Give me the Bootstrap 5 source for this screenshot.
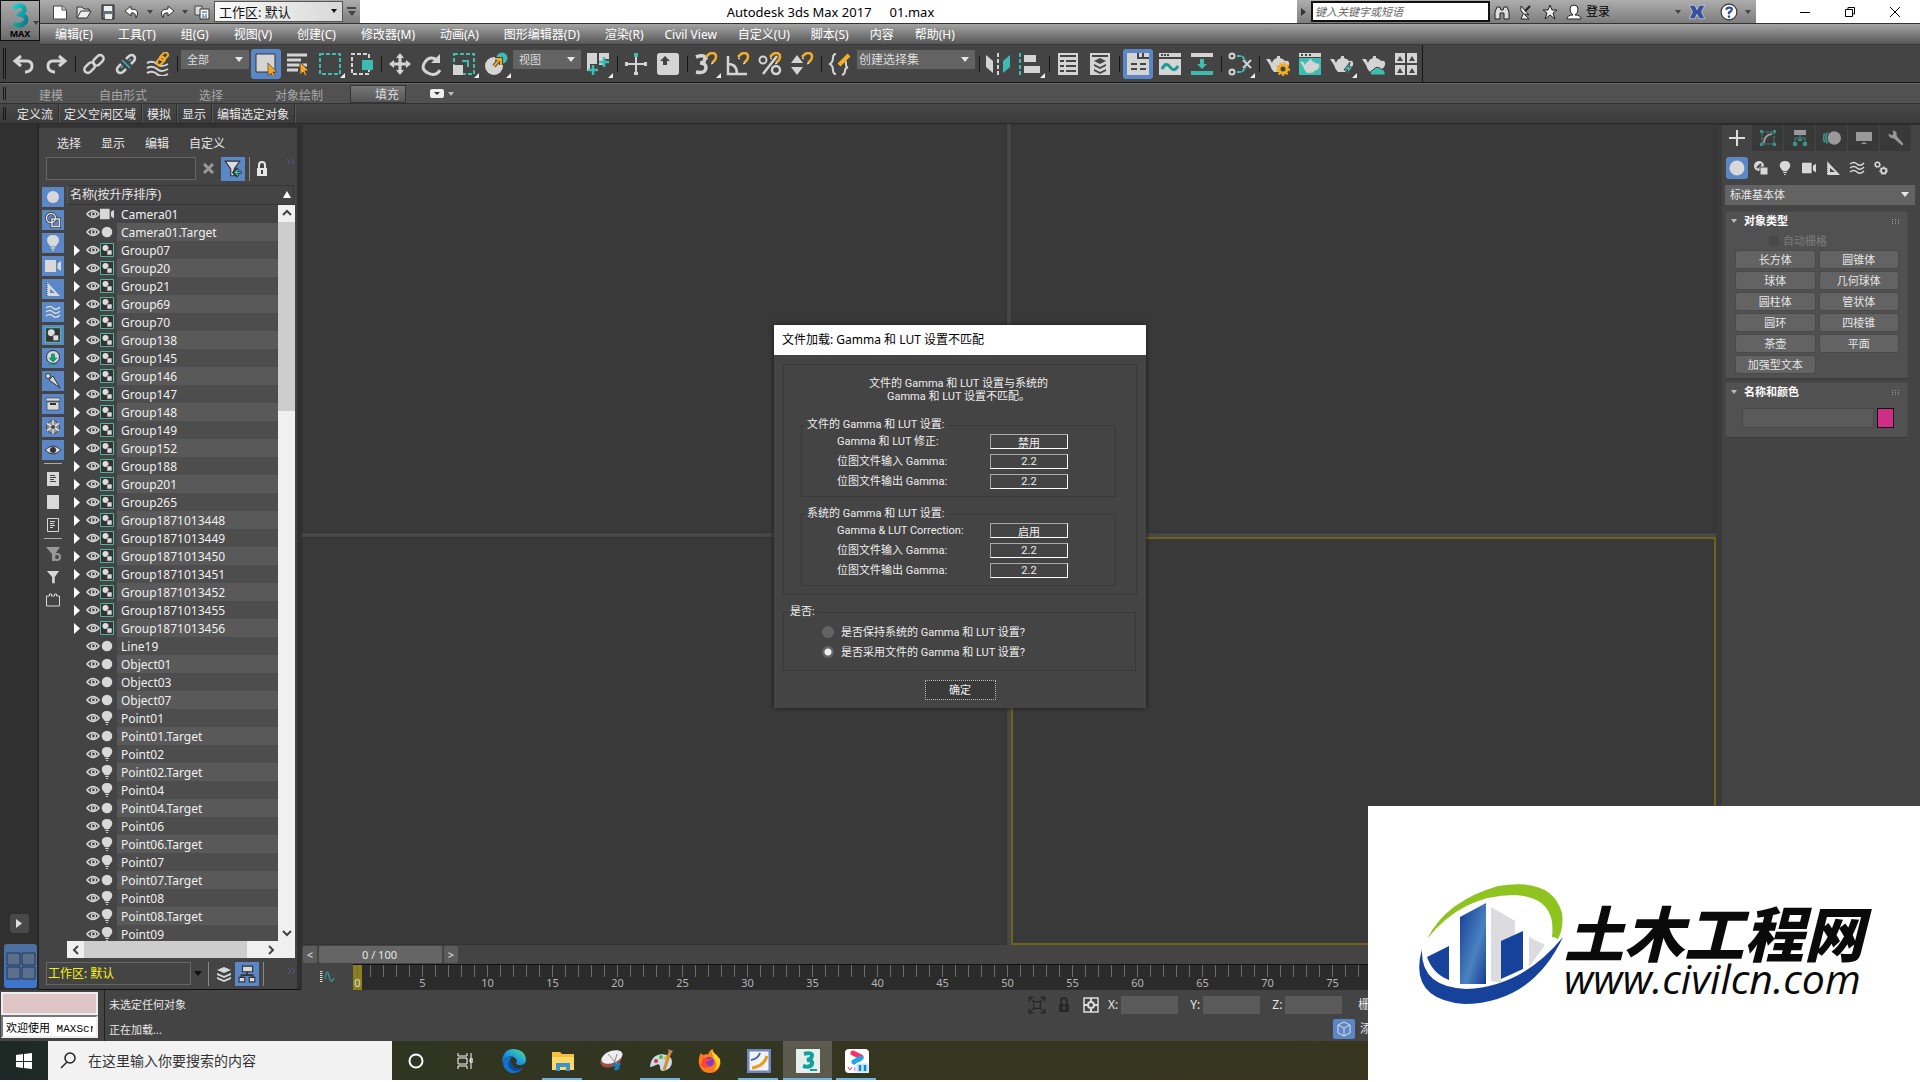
<!DOCTYPE html>
<html lang="zh-CN">
<head>
<meta charset="utf-8">
<meta name="viewport" content="width=device-width, initial-scale=1">
<title>Autodesk 3ds Max 2017</title>
<link href="https://cdn.jsdelivr.net/npm/bootstrap@5.3.0/dist/css/bootstrap.min.css" rel="stylesheet">
<style>
:root{--ui:#444;--blue:#5b87c6}
body{font-family:"Noto Sans","Noto Sans CJK SC",sans-serif;font-size:12px;line-height:16px;color:#e6e6e6;background:#fff;padding-bottom:2px;overflow:hidden;position:relative}
button,input,select{font:inherit;color:inherit}
button{background:none;border:0;padding:0;display:flex;align-items:center;justify-content:center;flex:none}
input{min-width:0}
a{color:inherit;text-decoration:none}
svg{display:block;flex:none}
.min-h{min-height:0}
.s14{width:14px;height:14px}.s16{width:16px;height:16px}.s18{width:18px;height:18px}.s20{width:20px;height:20px}.s24{width:24px;height:24px}
.turn-l{rotate:-90deg}.turn-r{rotate:90deg}.turn-d{rotate:180deg}
/* title and menus */
.app-head{height:45px;background:#444}
.app-logo{width:40px;height:41px;border:1px solid #111;background:linear-gradient(#aaa,#8c8c8c 55%,#6a6a6a)}
.app-logo b{font-size:9px;line-height:10px;color:#000}
.title-row{height:24px;background:#fff;color:#000;border-bottom:1px solid #333}
.title-text{gap:18px;font-size:13px;padding-left:4px}
.title-tools{background:linear-gradient(#adadad,#7d7d7d)}
.qa{width:320px}
.qa button{width:24px;height:22px}
.qa .tiny{width:11px}
.qa .cust{width:17px;gap:2px}
.cust i{width:9px;height:2px;background:#444}
.drop{position:relative;display:flex;flex:none}
.drop select{appearance:none;width:100%;border:0;border-radius:0;outline:0;padding:0 18px 0 6px}
.drop::after{content:"";position:absolute;right:6px;top:50%;margin-top:-3px;border:4px solid transparent;border-top:5px solid currentColor;border-bottom:0;pointer-events:none}
.ws{width:129px;color:#111}.ws select{background:linear-gradient(90deg,#fafafa,#d8d8d8);border:1px solid #555;height:21px;font-size:13px;padding-left:4px}
.tri{width:0;height:0;border:4px solid transparent;border-top:5px solid #444;border-bottom:0}
.ws::after,.tri-s{border-width:4px 3px 0}
.tri-l{border-top-color:#bbb}
.info-c{width:459px}
.info-c input{width:179px;height:21px;border:2px solid #111;background:#fff;font-size:11px;font-style:italic;padding:0 2px;color:#555}
.info-c input::placeholder{color:#666;opacity:1}
.info-c button{width:24px;height:22px}
.info-c .fold{width:14px}.info-c .login{width:97px}
.win-b{width:164px;padding-left:26px}
.win-b button{width:45px}
.menu-row{height:21px;background:linear-gradient(#a4a4a4,#565656);border-bottom:1px solid #3a3a3a;padding:2px 0 0 15px;color:#fff;gap:21px}
.menu-main{gap:25px}
/* main toolbar */
.tool-row{height:38px;background:#444;border-bottom:1px solid #151515}
.tool-set{padding:1px 0 0 8px;border-right:1px solid #151515;position:relative}
.grip{position:absolute;left:3px;top:3px;bottom:3px;width:3px;border:solid #161616;border-width:0 1px}
.tool-set button{width:32px;height:30px;position:relative}
.tool-set .on{width:30px;margin:0 1px;background:var(--blue);border-radius:3px}
.fly::after{content:"";position:absolute;right:1px;bottom:1px;border-left:5px solid transparent;border-bottom:5px solid #eee}
.bar{width:1px;height:16px;background:#151515;margin:0 2px 0 3px}
.tool-set .drop{align-self:flex-start;margin:4px 1px 0}
.tool-set .drop select{background:#636363;height:19px;color:#ddd;font-size:11px}
.w68{width:68px}.w118{width:118px}
.tool-set .w118 select{font-size:12px;padding-left:2px}
/* ribbon */
.rib-tabs{height:21px;background:#515151;border-top:1px solid #6a6a6a;border-bottom:1px solid #333;color:#a8a8a8;position:relative;padding-left:15px}
.rib-tabs button{padding:4px 24px 0}
.rib-tabs .near{padding:4px 8px 0;margin:0 18px 0 4px}
.rib-tabs .wide{padding:4px 26px 0}
.rib-tabs .sel{height:18px;background:linear-gradient(#777,#555);color:#ddd;border:1px solid #333;padding:1px 6px 0 24px;align-self:flex-end;margin-left:1px}
.rib-cmds{height:20px;background:linear-gradient(#484848,#3b3b3b);border-bottom:1px solid #2a2a2a;padding-left:12px;position:relative}
.rib-cmds a{padding:0 5px;border-right:1px solid #2e2e2e;box-shadow:1px 0 #585858;line-height:21px;height:19px}
/* left column */
.rail{width:39px;background:#303030;border-right:2px solid #262626}
.rail .go{width:19px;height:19px;border-radius:3px;background:#494949;margin:0 0 11px 10px}
.rail .lay{width:33px;height:44px;border-radius:3px;background:linear-gradient(#4d6f9c,#3c76cf);margin:0 0 2px 4px}
.expl{width:263px;background:var(--ui);border-top:4px solid #333;border-right:5px solid #303030;border-bottom:1px solid #111}
.expl-menu{padding:8px 0 0 18px;gap:20px;height:29px}
.expl-find{height:24px;padding-left:7px}
.expl-find input{flex:none;width:150px;height:23px;background:#3f3f3f;border:1px solid #666}
.expl-find .clr{width:25px;color:#999}
.expl-find .on,.expl-foot .on{width:24px;height:24px;background:var(--blue)}
.expl-foot .lyr{width:22px}
.kinds{width:28px;padding:6px 0 0 3px}
.kinds .on{background:var(--blue)}
.kinds button{width:22px;height:20px;margin-bottom:3px}
.kinds hr{width:18px;margin:1px 0 5px 2px;border-color:#aaa;opacity:1}
.tree-head{height:20px;border:1px solid #353535;border-left-color:#5a5a5a;padding:0 2px;margin:4px 1px 0 0}
.tree{width:211px;overflow:hidden;list-style:none;margin:0;padding:0}
.tree li{height:18px;display:flex;align-items:center}
.tree .twig{width:19px;height:18px;padding-left:7px}
.tree .nm{align-self:stretch;flex:1;margin-left:3px;padding-left:4px;background:#4d4d4d;line-height:20px;color:#f0f0f0}
.tree li:nth-child(even) .nm{background:#595959}
.tree li:first-child .nm{background:#444}
.sb-v{width:17px;background:#f0f0f0;color:#444}
.sb-v i{height:189px;background:#cdcdcd}
.sb-v span,.sb-h span{width:17px;height:17px;display:flex;align-items:center;justify-content:center}
.sb-h{height:17px;background:#f0f0f0;width:228px}
.sb-h i{width:163px;background:#cdcdcd}
.expl-foot{height:31px;padding:0 0 0 7px}
.expl-foot .drop{width:162px;color:#111}
.expl-foot .drop select{width:145px;height:23px;background:#444;border:1px solid #666;color:#f4f410;padding:0 0 0 1px}
.bl{width:1px;height:24px;background:#888}
/* viewports */
.views{display:grid;grid-template:1fr 1fr/1fr 1fr;gap:4px;background:#474747;flex:1}
.views>div{background:#393939;border:1px solid #333}
.views .act{border:2px solid #6f6219}
/* command panel */
.cmd{width:204px;background:var(--ui);border-left:6px solid #3a3a3a;border-top:1px solid #2c2c2c}
.cmd-tabs button{width:31px;height:26px;background:#393939;margin-right:1px}
.cmd-tabs button:first-child{background:#444;width:29px}
.cmd-kinds{padding:6px 0 6px 4px}
.cmd-kinds button{width:24px;height:22px}
.cmd-kinds .on{width:22px;margin-right:1px;background:var(--blue);border-radius:3px}
.cmd>.drop{width:190px;margin:0 0 6px 3px}
.cmd>.drop select{background:#636363;height:20px;font-size:11px;padding-left:5px}
.roll{width:183px;margin:0 0 3px 3px;background:#515151;border:1px solid #4a4a4a;border-bottom-color:#3a3a3a;border-radius:2px}
.roll h2{font-size:11px;line-height:18px;font-weight:700;color:#fff;margin:0;padding:0 8px 0 5px;gap:7px}
.prims{display:grid;grid-template-columns:1fr 1fr;gap:4px 5px;padding:0 9px 5px 10px;font-size:11px}
.prims button{height:17px;background:#636363;border-radius:2px;box-shadow:0 0 0 1px #4a4a4a}
.auto{font-size:11px;color:#7c7c7c;padding-left:43px;height:21px;gap:4px}
.auto input{appearance:none;width:10px;height:10px;background:#494949;margin:0}
.nm-row{padding:7px 13px 9px 16px;gap:3px}
.nm-row input{height:20px;background:#5a5a5a;border:1px solid #494949}
.nm-row button{width:17px;height:20px;background:#cf2d86;border:1px solid #111}
/* time */
.slide{height:19px;background:var(--ui);padding:1px 0 1px 1px;gap:2px;font-size:11px}
.slide button{width:14px;background:#5c5c5c;border-radius:2px}
.slide .th{width:123px;background:#656565;padding-right:2px}
.track{height:26px;background:var(--ui)}
.track .cv{width:51px;height:24px}
.ticks{flex:1;background:#2b2b2b;border-top:1px solid #111;display:flex;overflow:hidden}
.tick{width:13px;flex:none;display:flex;flex-direction:column;align-items:center;color:#b5b5b5;line-height:12px;font-size:11px;white-space:nowrap}
.tick::before{content:"";width:1px;height:12px;background:#6c6c6c;flex:none}
.tick.zero{width:9px;margin-right:2px;background:#8c8016;color:#ddd}
/* status */
.stat{height:51px;background:var(--ui)}
.maxs{width:105px;border-right:1px solid #222;padding:2px 0 0 1px}
.maxs input{width:97px;height:23px;border:2px solid #eee;background:#dfc5c6;display:block;padding:0 3px;color:#000}
.maxs input+input{background:#fff;border-color:#777 #eee #eee #777;font:11px "Liberation Mono","Noto Sans CJK SC",monospace}
.msgs{width:918px;font-size:11px;padding:7px 0 0 4px}
.msgs div{height:25px}
.xyz{height:29px}
.xyz button{width:27px;color:#292929}
.xyz input{width:57px;height:18px;border:0;background:#5a5a5a;margin:0 12px 0 3px}
.tags{padding-left:310px;gap:5px;white-space:nowrap}
.tags button{width:22px;height:20px;background:var(--blue);border-radius:2px}
/* taskbar */
.task{height:39px;background:linear-gradient(90deg,#1d2826,#303522 20%,#35361f 55%,#3a3521)}
.task button{width:49px;height:39px;position:relative}
.task .start,.task .thin{width:48px}
.task .seek{width:344px;background:#f2f2f2;color:#333;font-size:14px;padding-left:12px;gap:9px}
.task .seek input{border:0;background:none;flex:1}
.task .seek input::placeholder{color:#333;opacity:1}
.run::after{content:"";position:absolute;left:4px;right:5px;bottom:0;height:2px;background:#6fb3e6}
.task .cur{background:#5b5a4c}
.cur::after{left:0;right:0}
/* dialog */
.dlg{position:absolute;left:50%;top:325px;width:372px;margin-left:-186px;padding-bottom:8px;background:#444;box-shadow:0 0 5px #1a1a1a;font-family:Roboto,"Noto Sans CJK SC",sans-serif;font-size:11px;line-height:13px;color:#eee}
.dlg h1{height:30px;margin:0;background:#fff;color:#000;font:12px/30px "Noto Sans","Noto Sans CJK SC",sans-serif;padding-left:8px}
.dlg fieldset{border:1px solid #393939}
.dlg legend{float:none;width:auto;font-size:11px;line-height:12px;margin:0;padding:0 2px;color:#eee}
.outer{margin:9px 9px 0;border:1px solid #393939;padding:12px 20px 8px 17px}
.outer fieldset{padding:3px 47px 7px 35px;margin-top:11px}
.outer .first{margin-top:16px}
.outer legend{margin-left:-32px}
.pair{display:flex;height:15px;margin-bottom:5px;justify-content:space-between;align-items:center}
.pair:last-child{margin:0}
.pair input{width:78px;height:15px;border:1px solid #fff;border-top-color:#aaa;border-left-color:#aaa;background:#444;text-align:center;padding:0}
.ask{margin:11px 10px 0 9px;padding:4px 0 8px 38px}
.ask legend{margin-left:-34px}
.ask label{height:20px;gap:7px}
.ask input{appearance:none;width:12px;height:12px;border-radius:50%;background:#636363;margin:0}
.ask input:checked{background:radial-gradient(#eee 0 3px,#636363 4px)}
.dlg .ok{width:71px;height:20px;border:1px dotted #bbb;background:#3a3a3a;margin:9px auto 0}
/* site banner */
.site{position:absolute;right:0;bottom:0;width:552px;height:276px;background:#fff;color:#0a0a0a;padding:77px 0 0 48px}
.site-name{padding-top:19px}
.site .cn{font:italic 900 60px/58px "Noto Sans CJK SC",sans-serif}
.site .en{font:italic 500 41px/36px "Open Sans",sans-serif}
</style>
</head>
<body class="d-flex flex-column vh-100">

<svg width="0" height="0" class="position-absolute" aria-hidden="true">
<defs>
<linearGradient id="g3" x1="0" y1="0" x2="1" y2="1"><stop stop-color="#1fd0d0"/><stop offset="1" stop-color="#067b86"/></linearGradient>
<linearGradient id="ge" x1="0" y1="1" x2="1" y2="0"><stop stop-color="#0b5bb5"/><stop offset=".5" stop-color="#1b9de2"/><stop offset="1" stop-color="#5fe27a"/></linearGradient>
<linearGradient id="gb" x1="0" y1="0" x2="1" y2="1"><stop stop-color="#123a94"/><stop offset=".6" stop-color="#4a83c0"/><stop offset="1" stop-color="#143c95"/></linearGradient>
</defs>
<symbol id="three" viewBox="0 0 24 28"><path d="M5 6Q11 1 16 5Q19 10 11 13Q21 14 18 21Q13 27 5 23" fill="none" stroke="url(#g3)" stroke-width="5" stroke-linejoin="round"/></symbol>
<symbol id="new" viewBox="0 0 16 16"><path d="M1.500 2h9l4 4v9h-13z" fill="#fff" stroke="#444"/><path d="M10 2v4h4" fill="#ccc" stroke="#555"/></symbol>
<symbol id="open" viewBox="0 0 16 16"><path d="M1 14V3h5l2 2h5v3" fill="#ddd" stroke="#333"/><path d="M1 14 5 7h10l-4 7z" fill="#eee" stroke="#333"/></symbol>
<symbol id="save" viewBox="0 0 16 16"><path d="M2 1h12v14H2z" fill="#6a7078" stroke="#222"/><path d="M4 2h8v5H4zM5 10h7v5H5z" fill="#eee"/></symbol>
<symbol id="qundo" viewBox="0 0 16 16"><path d="M7 2 1 7l6 5V9q5-1 5 5 5-9-5-9z" fill="#fff" stroke="#333"/></symbol>
<symbol id="qredo" viewBox="0 0 16 16"><path d="m9 2 6 5-6 5V9q-5-1-5 5-5-9 5-9z" fill="#fff" stroke="#333"/></symbol>
<symbol id="proj" viewBox="0 0 16 16"><path d="M1 2h7v9H1z" fill="#ddd" stroke="#444"/><path d="M6 5h9v10H6z" fill="#f5f5f5" stroke="#333"/><path d="M8 8h5M8 11h2m1 0h2M8 13h5" stroke="#357"/></symbol>
<symbol id="binoc" viewBox="0 0 16 16"><path d="M1 15V8l2-5h3l1 3h2l1-3h3l2 5v7h-5V9H6v6z" fill="#ddd" stroke="#222"/></symbol>
<symbol id="dish" viewBox="0 0 16 16"><path d="M3 2q-2 8 8 9zM5 10l-2 5h8l-4-4" fill="#eee" stroke="#222"/><path d="m7 7 5-5" stroke="#222" stroke-width="2"/></symbol>
<symbol id="star" viewBox="0 0 16 16"><path d="m8 1 2 5h5l-4 3 2 6-5-4-5 4 2-6-4-3h5z" fill="#eee" stroke="#222"/></symbol>
<symbol id="user" viewBox="0 0 16 16"><path d="M8 1q4 0 4 4t-3 6q6 0 6 4H1q0-4 6-4-3-2-3-6t4-4z" fill="#fff" stroke="#222"/></symbol>
<symbol id="xch" viewBox="0 0 16 16"><path d="M1 2h5l2 4 2-4h5l-3 6 3 6h-5l-2-4-2 4H1l3-6z" fill="#36519c" stroke="#dde" stroke-width=".6"/></symbol>
<symbol id="help" viewBox="0 0 16 16"><circle cx="8" cy="8" r="7" fill="#fff" stroke="#333"/><path d="M5.500 6Q6 4 8 4q3 0 2.500 2Q10 7.500 8 8.500V10M8 11v2" fill="none" stroke="#2a4da0" stroke-width="2"/></symbol>
<symbol id="undo" viewBox="0 0 24 24"><path d="M9 4 3 9l6 5M4 9h11q5 0 5 5t-6 6h-1" fill="none" stroke="#d4d4d4" stroke-width="3"/></symbol>
<symbol id="redo" viewBox="0 0 24 24"><path d="m15 4 6 5-6 5M20 9H9q-5 0-5 5t6 6h1" fill="none" stroke="#d4d4d4" stroke-width="3"/></symbol>
<symbol id="link" viewBox="0 0 24 24"><g fill="none" stroke="#d4d4d4" stroke-width="2.500"><rect x="10" y="5" width="12" height="7" rx="3.500" transform="rotate(-45 16 8)"/><rect x="2" y="12" width="12" height="7" rx="3.500" transform="rotate(-45 8 16)"/></g></symbol>
<symbol id="unlink" viewBox="0 0 24 24"><g fill="none" stroke="#d4d4d4" stroke-width="2.500"><path d="m12 7 3-3q3-2 5 0t0 5l-3 3M12 17l-3 3q-3 2-5 0t0-5l3-3"/><path d="m8 8 8 8M7 16l2-2m6-5 2-2" stroke="#3dbdb2" stroke-width="1.500"/></g></symbol>
<symbol id="bind" viewBox="0 0 24 24"><path d="M1 11q6-3 10 1t11 0M1 16q6-3 10 1t11 0M1 21q6-3 10 1t11 0" fill="none" stroke="#d4d4d4" stroke-width="2"/><g fill="none" stroke="#f2ae24" stroke-width="2"><rect x="14" y="2" width="9" height="5" rx="2.500" transform="rotate(-45 18 5)"/><rect x="10" y="7" width="9" height="5" rx="2.500" transform="rotate(-45 14 9)"/></g></symbol>
<symbol id="sel" viewBox="0 0 24 24"><path d="M2 2h19v18H2z" fill="#d4d4d4" stroke="#333"/><path d="M14 11v13l3-3 2 4 2-1-2-4h4z" fill="#f5a623" stroke="#333" stroke-width=".6"/></symbol>
<symbol id="selname" viewBox="0 0 24 24"><path d="M1 3h20M1 8h14M1 13h20M1 18h11" stroke="#d4d4d4" stroke-width="3"/><path d="M14 10v13l3-3 2 4 2-1-2-4h4z" fill="#f5a623" stroke="#444"/></symbol>
<symbol id="rect" viewBox="0 0 24 24"><path d="M2 2h20v20H2z" fill="none" stroke="#3dbdb2" stroke-width="2" stroke-dasharray="4 2"/></symbol>
<symbol id="cross" viewBox="0 0 24 24"><path d="M19 6V2H2v20h17v-4" fill="none" stroke="#d4d4d4" stroke-width="2" stroke-dasharray="4 2"/><path d="M12 8h11v10H12z" fill="#3dbdb2"/></symbol>
<symbol id="move" viewBox="0 0 24 24"><path d="M12 1 8 6h2.500v4.500H6V8l-5 4 5 4v-2.500h4.500V18H8l4 5 4-5h-2.500v-4.500H18V16l5-4-5-4v2.500h-4.500V6H16z" fill="#d4d4d4"/></symbol>
<symbol id="rot" viewBox="0 0 24 24"><path d="M17 8q-7-5-12 2t3 11 12-3" fill="none" stroke="#d4d4d4" stroke-width="3"/><path d="M20 2v9h-9z" fill="#d4d4d4"/></symbol>
<symbol id="scale" viewBox="0 0 24 24"><path d="M2 2h20v20H2z" fill="none" stroke="#3dbdb2" stroke-width="2" stroke-dasharray="4 2"/><path d="M1 13h10v10H1z" fill="#d4d4d4"/><path d="M10 9h6v6" fill="none" stroke="#3dbdb2" stroke-width="2"/></symbol>
<symbol id="place" viewBox="0 0 24 24"><circle cx="10" cy="14" r="9" fill="#d4d4d4"/><circle cx="18" cy="6" r="5.500" fill="#3dbdb2"/><path d="M10 14 16 7m-5 0h6v6" fill="none" stroke="#444" stroke-width="4"/><path d="M10 14 16 7m-5 0h6v6" fill="none" stroke="#f5a623" stroke-width="2"/></symbol>
<symbol id="pivot" viewBox="0 0 24 24"><path d="M1 1h10v11H4v7H1zM13 1h10v6h-5v6h-5z" fill="#d4d4d4"/><path d="M7 13v10M2 18h10M18 5v10M13 10h10" stroke="#3dbdb2" stroke-width="2.500"/></symbol>
<symbol id="manip" viewBox="0 0 24 24"><path d="M12 5v18M1 12h22" stroke="#d4d4d4" stroke-width="2"/><path d="M1 10h3v4H1zM20 10h3v4h-3zM10 20h4v3h-4z" fill="#d4d4d4"/><path d="M10 1h4v4h-4z" fill="#3dbdb2"/></symbol>
<symbol id="key" viewBox="0 0 24 24"><rect x="1" y="1" width="22" height="22" rx="3" fill="#d4d4d4"/><path d="m9 4-5 5h3v4h4V9h3z" fill="#444"/></symbol>
<symbol id="mag" viewBox="0 0 24 24"><path d="m12 5 3-3q4-2 6 0t0 6l-3 3" fill="none" stroke="#f2ae24" stroke-width="2.500"/><path d="m12 6 2 1m3 5 2-1" stroke="#fff"/></symbol>
<symbol id="snap3" viewBox="0 0 24 24"><path d="M2 5q8-3 9 1 0 5-5 5 6 0 6 5-1 6-10 4" fill="none" stroke="#d4d4d4" stroke-width="3.500"/><use href="#mag"/></symbol>
<symbol id="snapa" viewBox="0 0 24 24"><path d="M2 4v18h19M2 12q9 0 9 10" fill="none" stroke="#d4d4d4" stroke-width="2.500"/><use href="#mag"/></symbol>
<symbol id="snapp" viewBox="0 0 24 24"><circle cx="5" cy="8" r="3.500" fill="none" stroke="#d4d4d4" stroke-width="2"/><circle cx="18" cy="18" r="4" fill="none" stroke="#d4d4d4" stroke-width="2.500"/><path d="M19 4 5 22" stroke="#d4d4d4" stroke-width="2.500"/><use href="#mag"/></symbol>
<symbol id="snaps" viewBox="0 0 24 24"><path d="m7 3 6 8H1zM7 23l6-8H1z" fill="#d4d4d4"/><use href="#mag"/></symbol>
<symbol id="named" viewBox="0 0 24 24"><path d="M8 2Q5 2 5 6t-3 6q3 2 3 6t3 4M15 8q3 0 3 4t2 3q-3 1-3 4t-3 4" fill="none" stroke="#d4d4d4" stroke-width="2"/><path d="m11 13 10-10" stroke="#f2ae24" stroke-width="4"/></symbol>
<symbol id="mirror" viewBox="0 0 24 24"><path d="m0 3 7 6v12l-7-6z" fill="#d4d4d4"/><path d="m24 3-7 6v12l7-6z" fill="#3dbdb2"/><path d="M12 1v23" stroke="#d4d4d4" stroke-width="2" stroke-dasharray="4 2"/></symbol>
<symbol id="align" viewBox="0 0 24 24"><path d="M2 1v23" stroke="#3dbdb2" stroke-width="2" stroke-dasharray="4 2"/><path d="M6 3h12v7H6zM6 14h16v7H6z" fill="#d4d4d4"/></symbol>
<symbol id="lay1" viewBox="0 0 24 24"><path d="M2 1h20v22H2z" fill="#d4d4d4"/><path d="M4 4h16M4 9h4m2 0h10M4 14h4m2 0h10M4 19h4m2 0h10" stroke="#444" stroke-width="2"/></symbol>
<symbol id="lay2" viewBox="0 0 24 24"><path d="M2 1h20v22H2z" fill="#d4d4d4"/><path d="M4 4h16" stroke="#444" stroke-width="2"/><path d="m12 6 6 3-6 3-6-3zM6 12l6 3 6-3v2l-6 3-6-3zM6 17l6 3 6-3v2l-6 3-6-3z" fill="#444"/></symbol>
<symbol id="ribn" viewBox="0 0 24 24"><path d="M1 1h22v22H1z" fill="#d4d4d4"/><path d="M12 1v5h11M17 1v5M5 12h6m3 0h6M5 17h6m3 0h6" stroke="#444" stroke-width="2" fill="none"/></symbol>
<symbol id="curve" viewBox="0 0 24 24"><path d="M1 1h22v22H1z" fill="#d4d4d4"/><path d="M1 6h22M3 3h2m1 0h2m1 0h2" stroke="#444" stroke-width="2"/><path d="M4 17q4-8 8-2t8-1" fill="none" stroke="#189b95" stroke-width="3"/></symbol>
<symbol id="schem" viewBox="0 0 24 24"><path d="M1 1h22v4H1z" fill="#d4d4d4"/><path d="M1 19h22v4H1zM12 17l-5-5h3V7h4v5h3z" fill="#3dbdb2"/></symbol>
<symbol id="mat" viewBox="0 0 24 24"><circle cx="4" cy="4" r="2.500" fill="none" stroke="#d4d4d4" stroke-width="2"/><circle cx="4" cy="20" r="2.500" fill="none" stroke="#d4d4d4" stroke-width="2"/><path d="m15 8 8 8m-8 0 8-8" stroke="#d4d4d4" stroke-width="2"/><path d="M9 4h5l4 5M9 20h5l4-5" fill="none" stroke="#3dbdb2" stroke-width="2" stroke-dasharray="4 1"/></symbol>
<symbol id="pot" viewBox="0 0 24 24"><path d="M0 7h4l2 4q1-4 5-5V4h3v2q4 1 5 3 5-1 4 4-1 4-6 5l-2 2H8q-3-3-4-7z" fill="#d4d4d4"/></symbol>
<symbol id="pot1" viewBox="0 0 24 24"><use href="#pot"/><circle cx="17" cy="17" r="4" fill="#444" stroke="#f2ae24" stroke-width="3"/><circle cx="17" cy="17" r="6" fill="none" stroke="#f2ae24" stroke-width="2" stroke-dasharray="2 2"/></symbol>
<symbol id="pot2" viewBox="0 0 24 24"><path d="M1 1h22v4H1z" fill="#d4d4d4"/><path d="M3 3h2m2 0h2m2 0h2" stroke="#444" stroke-width="2"/><path d="M1 6h22v17H1z" fill="#3dbdb2"/><use href="#pot" width="20" height="20" x="2" y="4"/></symbol>
<symbol id="pot3" viewBox="0 0 24 24"><use href="#pot"/><path d="m20 10-6 8h4l-3 6 8-9h-4z" fill="#3dbdb2" stroke="#444"/></symbol>
<symbol id="pot4" viewBox="0 0 24 24"><use href="#pot"/><path d="M9 23q-2-4 2-5 4-5 8-1 5 1 4 6z" fill="#3dbdb2" stroke="#444"/></symbol>
<symbol id="gal" viewBox="0 0 24 24"><path d="M1 1h10v10H1zM13 1h10v10H13zM1 13h10v10H1zM13 13h10v10H13z" fill="#d4d4d4"/><path d="m3 9 3-5 3 5zM15 9l3-5 3 5zM3 21l3-5 3 5zM15 21l3-5 3 5z" fill="#444"/></symbol>
<symbol id="ball" viewBox="0 0 16 16"><circle cx="8" cy="8" r="6" fill="#d8d8d8"/></symbol>
<symbol id="shape" viewBox="0 0 16 16"><circle cx="6" cy="6" r="5" fill="#d8d8d8"/><path d="M7 7h8v8H7z" fill="#d8d8d8" stroke="#444"/><path d="m4 8 4-4" stroke="#444" stroke-width="2"/></symbol>
<symbol id="shapeo" viewBox="0 0 16 16"><circle cx="6" cy="6" r="4.500" fill="none" stroke="#333" stroke-width="3"/><path d="M7 7h8v8H7z" fill="none" stroke="#333" stroke-width="3"/><circle cx="6" cy="6" r="4.500" fill="none" stroke="#ddd" stroke-width="1.500"/><path d="M7 7h7.500v7.500H7z" fill="none" stroke="#ddd" stroke-width="1.500"/></symbol>
<symbol id="bulb" viewBox="0 0 16 16"><path d="M8 0q6 0 6 5.500 0 2-3.500 6h-5Q2 7.500 2 5.500 2 0 8 0z" fill="#d8d8d8"/><path d="M6 13h4M7 15.500h2" stroke="#d8d8d8" stroke-width="1.500"/></symbol>
<symbol id="cam" viewBox="0 0 16 16"><path d="M0 2h11v12H0zM12.500 5.500 16 3v10l-3.500-2.500z" fill="#d8d8d8"/></symbol>
<symbol id="tri" viewBox="0 0 16 16"><path d="M2 1v14h13zM5 8v4h5z" fill="#d8d8d8" fill-rule="evenodd"/><path d="M2 2v13" stroke="#444" stroke-dasharray="1 1"/></symbol>
<symbol id="wave" viewBox="0 0 16 16"><path d="M1 4q4-3 7 0t7-1M1 8q4-3 7 0t7-1M1 12q4-3 7 0t7-1" fill="none" stroke="#d8d8d8" stroke-width="1.500"/></symbol>
<symbol id="grp" viewBox="0 0 14 14"><path d="M.500 .500h13v13H.500z" fill="#343434" stroke="#4fb5a0"/><circle cx="5.500" cy="5" r="3" fill="#ddd"/><path d="M7 7h5v5H7z" fill="#ddd" stroke="#343434" stroke-width=".6"/></symbol>
<symbol id="xref" viewBox="0 0 16 16"><circle cx="8" cy="7" r="6.500" fill="#d8d8d8" stroke="#333"/><path d="M8 12 4 8h2.500V4h3v4H12zM3 14.500h10" fill="#189b75" stroke="#189b75"/></symbol>
<symbol id="bone" viewBox="0 0 16 16"><circle cx="3" cy="3" r="2.500" fill="#d8d8d8" stroke="#333"/><path d="m4 7 4-4 7 12z" fill="#d8d8d8" stroke="#333"/></symbol>
<symbol id="box" viewBox="0 0 16 16"><path d="M1 2h14v3H1zM2 6h12v8H2z" fill="#d8d8d8" stroke="#333" stroke-width=".6"/><path d="M5 8h6" stroke="#333" stroke-width="2"/></symbol>
<symbol id="snow" viewBox="0 0 16 16"><circle cx="8" cy="8" r="6.500" fill="#8a929c" stroke="#444"/><path d="M8 1v14M2 4.500l12 7M14 4.500l-12 7" stroke="#ddd" stroke-width="1.500"/><circle cx="8" cy="8" r="2" fill="#444"/></symbol>
<symbol id="eye" viewBox="0 0 16 16"><path d="M1 8q7-8 14 0-7 8-14 0z" fill="none" stroke="#d8d8d8" stroke-width="1.500"/><circle cx="8.500" cy="8" r="2.300" fill="none" stroke="#ddd" stroke-width="1.400"/></symbol>
<symbol id="eyeb" viewBox="0 0 16 16"><path d="M0 8q8-8 16 0-8 8-16 0z" fill="#d8d8d8" stroke="#333"/><circle cx="8" cy="8" r="3" fill="#333"/></symbol>
<symbol id="doc" viewBox="0 0 16 16"><path d="M2 1h12v14H2z" fill="#d8d8d8"/><path d="M5 4.500h5M5 6.500h6M5 8.500h4M5 10.500h6" stroke="#444"/></symbol>
<symbol id="blank" viewBox="0 0 16 16"><path d="M2 1h12v14H2z" fill="#d8d8d8"/></symbol>
<symbol id="doco" viewBox="0 0 16 16"><path d="M2.500 1.500h11v13h-11zM5 4.500h5M5 6.500h4M5 8.500h5M5 10.500h3" fill="none" stroke="#d8d8d8"/></symbol>
<symbol id="fun" viewBox="0 0 16 16"><path d="M1 1h14L10 8v7H7V8z" fill="#d8d8d8"/></symbol>
<symbol id="fung" viewBox="0 0 16 16"><path d="M1 1h14L10 8v7H7V8z" fill="#999"/><circle cx="12" cy="11" r="3" fill="#444" stroke="#999" stroke-width="2"/></symbol>
<symbol id="funb" viewBox="0 0 16 16"><path d="M1 1h13L9 8v6H6V8z" fill="#ddd" stroke="#333"/><path d="M15.500 11H9m3.500-3.500L9 11l3.500 3.500" fill="none" stroke="#233" stroke-width="3"/><path d="M15 11H9.500m3-2.500L10 11l2.500 2.500" fill="none" stroke="#4fc7b5" stroke-width="1.200"/></symbol>
<symbol id="clip" viewBox="0 0 16 16"><path d="M1.500 4h3V2h2v2h3V2h2v2h3v10h-13z" fill="none" stroke="#d8d8d8"/></symbol>
<symbol id="lock" viewBox="0 0 16 16"><path d="M5 7V4q0-3 3-3t3 3v3" fill="none" stroke="currentColor" stroke-width="2"/><path d="M3 7h10v8H3zM7 9v4h2V9z" fill="currentColor" fill-rule="evenodd"/></symbol>
<symbol id="stack" viewBox="0 0 16 16"><path d="m8 1 7 3-7 3-7-3zM1 7l7 3 7-3v2l-7 3-7-3zM1 11l7 3 7-3v2l-7 3-7-3z" fill="#d8d8d8"/></symbol>
<symbol id="hier" viewBox="0 0 16 16"><path d="M4 1h9v5H4zM1 11h5v4H1zM10 11h5v4h-5z" fill="#d8d8d8" stroke="#333"/><path d="M8 6v3M3 11V9h10v2" fill="none" stroke="#333" stroke-width="1.500"/></symbol>
<symbol id="hiert" viewBox="0 0 16 16"><path d="M2 0h12v5H2z" fill="#999"/><path d="M8 5v3M3 12V8h10v4" fill="none" stroke="#3a9188"/><path d="M1 12h4v4H1zM6 9h4v2H6zM11 12h4v4h-4z" fill="#3a9188"/></symbol>
<symbol id="modi" viewBox="0 0 16 16"><path d="M2 2h12v12H2z" fill="none" stroke="#3a9188" stroke-dasharray="3 1"/><path d="M0 0h3v3H0zM13 0h3v3h-3zM0 13h3v3H0zM13 13h3v3h-3z" fill="#3a9188"/><path d="M4 13q0-8 8-9" fill="none" stroke="#999" stroke-width="2"/></symbol>
<symbol id="moti" viewBox="0 0 16 16"><circle cx="10" cy="8" r="6" fill="#999"/><path d="M4 3q-3 5 0 10M1.500 4q-2 4 0 8" fill="none" stroke="#3a9188" stroke-width="1.500"/></symbol>
<symbol id="disp" viewBox="0 0 16 16"><path d="M0 2h16v9H0zM5 14l3-2 3 2z" fill="#999"/></symbol>
<symbol id="util" viewBox="0 0 16 16"><path d="m14 15 1-1-7-8q1-5-3-5L6 4 4 6 1 4q0 4 5 4z" fill="#999" stroke="#999"/></symbol>
<symbol id="gears" viewBox="0 0 16 16"><g fill="none" stroke="#d8d8d8"><circle cx="4" cy="4" r="2.500" stroke-width="1.500"/><circle cx="4" cy="4" r="3.500" stroke-dasharray="1.500 1.500"/><circle cx="11" cy="11" r="3" stroke-width="2"/><circle cx="11" cy="11" r="4.500" stroke-dasharray="2 2"/></g></symbol>
<symbol id="cube" viewBox="0 0 16 16"><path d="m8 1 6 3v8l-6 3-6-3V4zM2 4l6 3 6-3M8 7v8" fill="none" stroke="#ddd"/></symbol>
<symbol id="iso" viewBox="0 0 16 16"><path d="M1 5V1h4M11 1h4v4M15 11v4h-4M5 15H1v-4M5 5h6v6H5zM1 1l4 4m10-4-4 4M1 15l4-4m10 4-4-4" fill="none" stroke="#252525"/></symbol>
<symbol id="absm" viewBox="0 0 16 16"><path d="M1 1h14v14H1z" fill="none" stroke="#ddd" stroke-width="1.500"/><circle cx="8" cy="8" r="3" fill="none" stroke="#ddd" stroke-width="2"/><path d="M8 1v3m0 8v3M1 8h3m8 0h3" stroke="#ddd" stroke-width="2"/></symbol>
<symbol id="chev" viewBox="0 0 10 10"><path d="m1 7 4-4 4 4" fill="none" stroke="#444" stroke-width="2"/></symbol>
<symbol id="more" viewBox="0 0 10 10"><path d="m1 2 3 3-3 3m4-6 3 3-3 3" fill="none" stroke="#55559b"/></symbol>
<symbol id="dots" viewBox="0 0 7 7"><path d="M0 1.500h7M0 3.500h7M0 5.500h7" stroke="#999" stroke-dasharray="1 2"/></symbol>
</svg>

<header class="app-head d-flex flex-shrink-0">
  <button class="app-logo flex-column position-relative" aria-label="应用程序菜单">
    <svg width="22" height="27"><use href="#three"/></svg>
    <b>MAX</b>
    <span class="tri tri-s position-absolute end-0 top-50"></span>
  </button>
  <div class="flex-grow-1 d-flex flex-column">
    <div class="title-row d-flex">
      <div class="title-tools qa d-flex align-items-center ps-2">
        <button aria-label="新建"><svg class="s16"><use href="#new"/></svg></button>
        <button aria-label="打开"><svg class="s16"><use href="#open"/></svg></button>
        <button aria-label="保存"><svg class="s16"><use href="#save"/></svg></button>
        <button aria-label="撤消"><svg class="s16"><use href="#qundo"/></svg></button>
        <button class="tiny" aria-label="撤消列表"><span class="tri tri-s"></span></button>
        <button aria-label="重做"><svg class="s16"><use href="#qredo"/></svg></button>
        <button class="tiny" aria-label="重做列表"><span class="tri tri-s"></span></button>
        <button aria-label="项目"><svg class="s16"><use href="#proj"/></svg></button>
        <div class="drop ws"><select aria-label="工作区"><option>工作区: 默认</option></select></div>
        <button class="cust flex-column" aria-label="自定义"><i></i><span class="tri"></span></button>
      </div>
      <div class="title-text flex-grow-1 d-flex align-items-center justify-content-center"><span>Autodesk 3ds Max 2017</span><span>01.max</span></div>
      <div class="title-tools info-c d-flex align-items-center">
        <button class="fold" aria-label="折叠"><svg width="6" height="8"><path d="M0 0l5 4-5 4z" fill="#333"/></svg></button>
        <input type="text" placeholder="键入关键字或短语" aria-label="搜索帮助">
        <button aria-label="搜索"><svg class="s16"><use href="#binoc"/></svg></button>
        <button aria-label="通讯中心"><svg class="s16"><use href="#dish"/></svg></button>
        <button aria-label="收藏夹"><svg class="s16"><use href="#star"/></svg></button>
        <button class="login justify-content-start ps-1 gap-1"><svg class="s16"><use href="#user"/></svg>登录</button>
        <span class="tri tri-s ms-3"></span>
        <button class="ms-1" aria-label="应用"><svg class="s18"><use href="#xch"/></svg></button>
        <button class="ms-2" aria-label="帮助"><svg class="s18"><use href="#help"/></svg></button>
        <span class="tri tri-s ms-1"></span>
      </div>
      <div class="win-b d-flex">
        <button aria-label="最小化"><svg width="12" height="12"><path d="M1 6.500h10" stroke="#000"/></svg></button>
        <button aria-label="还原"><svg width="12" height="12"><path d="M1.500 3.500h7v7h-7zM4 3V1.500h6.500V8H9" fill="none" stroke="#000"/></svg></button>
        <button aria-label="关闭"><svg width="12" height="12"><path d="m1 1 10 10M11 1 1 11" stroke="#000"/></svg></button>
      </div>
    </div>
    <nav class="menu-row d-flex align-items-center">
      <div class="menu-main d-flex"><a href="#">编辑(E)</a><a href="#">工具(T)</a><a href="#">组(G)</a><a href="#">视图(V)</a><a href="#">创建(C)</a><a href="#">修改器(M)</a><a href="#">动画(A)</a><a href="#">图形编辑器(D)</a><a href="#">渲染(R)</a></div>
      <a href="#">Civil View</a><a href="#">自定义(U)</a><a href="#">脚本(S)</a><a href="#">内容</a><a href="#">帮助(H)</a>
    </nav>
  </div>
</header>

<div class="tool-row d-flex flex-shrink-0" role="toolbar" aria-label="主工具栏">
  <div class="tool-set d-flex align-items-center"><span class="grip"></span>
    <button><svg class="s24"><use href="#undo"/></svg></button><button><svg class="s24"><use href="#redo"/></svg></button><span class="bar"></span>
    <button><svg class="s24"><use href="#link"/></svg></button><button><svg class="s24"><use href="#unlink"/></svg></button><button><svg class="s24"><use href="#bind"/></svg></button><span class="bar"></span>
    <div class="drop w68"><select aria-label="选择过滤器"><option>全部</option></select></div>
    <button class="on"><svg class="s24"><use href="#sel"/></svg></button><button><svg class="s24"><use href="#selname"/></svg></button><button class="fly"><svg class="s24"><use href="#rect"/></svg></button><button><svg class="s24"><use href="#cross"/></svg></button><span class="bar"></span>
    <button><svg class="s24"><use href="#move"/></svg></button><button><svg class="s24"><use href="#rot"/></svg></button><button class="fly"><svg class="s24"><use href="#scale"/></svg></button><button class="fly"><svg class="s24"><use href="#place"/></svg></button>
    <div class="drop w68"><select aria-label="参考坐标系"><option>视图</option></select></div>
    <button class="fly"><svg class="s24"><use href="#pivot"/></svg></button><span class="bar"></span>
    <button><svg class="s24"><use href="#manip"/></svg></button><button><svg class="s24"><use href="#key"/></svg></button><span class="bar"></span>
    <button class="fly"><svg class="s24"><use href="#snap3"/></svg></button><button><svg class="s24"><use href="#snapa"/></svg></button><button><svg class="s24"><use href="#snapp"/></svg></button><button><svg class="s24"><use href="#snaps"/></svg></button><span class="bar"></span>
    <button><svg class="s24"><use href="#named"/></svg></button>
    <div class="drop w118"><select aria-label="命名选择集"><option>创建选择集</option></select></div><span class="bar"></span>
    <button><svg class="s24"><use href="#mirror"/></svg></button><button class="fly"><svg class="s24"><use href="#align"/></svg></button><span class="bar"></span>
    <button><svg class="s24"><use href="#lay1"/></svg></button><button><svg class="s24"><use href="#lay2"/></svg></button><span class="bar"></span>
    <button class="on"><svg class="s24"><use href="#ribn"/></svg></button><button><svg class="s24"><use href="#curve"/></svg></button><button><svg class="s24"><use href="#schem"/></svg></button><span class="bar"></span>
    <button class="fly"><svg class="s24"><use href="#mat"/></svg></button><span class="bar"></span>
    <button><svg class="s24"><use href="#pot1"/></svg></button><button><svg class="s24"><use href="#pot2"/></svg></button><button class="fly"><svg class="s24"><use href="#pot3"/></svg></button><button><svg class="s24"><use href="#pot4"/></svg></button><button><svg class="s24"><use href="#gal"/></svg></button>
  </div>
</div>

<div class="rib-tabs d-flex align-items-stretch flex-shrink-0"><span class="grip"></span>
  <button>建模</button><button class="near">自由形式</button><button class="wide">选择</button><button class="wide">对象绘制</button><button class="sel">填充</button>
  <button class="ps-4 pe-0 pt-0 gap-1" aria-label="最小化功能区"><svg width="14" height="9"><rect width="14" height="9" rx="2" fill="#eee"/><path d="M4 3h6l-3 3z" fill="#333"/></svg><span class="tri tri-s tri-l"></span></button>
</div>
<div class="rib-cmds d-flex flex-shrink-0"><span class="grip"></span><a href="#">定义流</a><a href="#">定义空闲区域</a><a href="#">模拟</a><a href="#">显示</a><a href="#">编辑选定对象</a></div>

<main class="d-flex flex-grow-1 min-h">
  <aside class="rail d-flex flex-column justify-content-end">
    <button class="go" aria-label="展开"><svg width="7" height="9"><path d="M0 0l6 4.500L0 9z" fill="#ddd"/></svg></button>
    <button class="lay" aria-label="视口布局"><svg width="30" height="28"><path d="M1 1h13v12H1zM16 1h13v12H16zM1 15h13v12H1zM16 15h13v12H16z" fill="#5a6f8c" stroke="#26374f"/></svg></button>
  </aside>

  <section class="expl d-flex flex-column">
    <nav class="expl-menu d-flex"><a href="#">选择</a><a href="#">显示</a><a href="#">编辑</a><a href="#">自定义</a></nav>
    <div class="expl-find d-flex align-items-center">
      <input type="text" aria-label="查找">
      <button class="clr" aria-label="清除"><svg width="11" height="11"><path d="m1 1 9 9M10 1l-9 9" stroke="currentColor" stroke-width="3"/></svg></button>
      <button class="on" aria-label="过滤"><svg class="s18"><use href="#funb"/></svg></button><span class="bl ms-1"></span>
      <button class="ms-1" aria-label="锁定"><svg class="s16"><use href="#lock"/></svg></button>
      <svg class="ms-3 align-self-start" width="10" height="10"><use href="#more"/></svg>
    </div>
    <div class="d-flex flex-grow-1 min-h">
      <div class="kinds">
        <button class="on"><svg class="s16"><use href="#ball"/></svg></button><button class="on"><svg class="s16"><use href="#shapeo"/></svg></button><button class="on"><svg class="s16"><use href="#bulb"/></svg></button><button class="on"><svg class="s16"><use href="#cam"/></svg></button><button class="on"><svg class="s16"><use href="#tri"/></svg></button><button class="on"><svg class="s16"><use href="#wave"/></svg></button><button class="on"><svg class="s16"><use href="#grp"/></svg></button><button class="on"><svg class="s16"><use href="#xref"/></svg></button><button class="on"><svg class="s16"><use href="#bone"/></svg></button><button class="on"><svg class="s16"><use href="#box"/></svg></button><button class="on"><svg class="s16"><use href="#snow"/></svg></button><button class="on"><svg class="s16"><use href="#eyeb"/></svg></button>
        <hr>
        <button><svg class="s16"><use href="#doc"/></svg></button><button><svg class="s16"><use href="#blank"/></svg></button><button><svg class="s16"><use href="#doco"/></svg></button>
        <hr>
        <button><svg class="s16"><use href="#fung"/></svg></button><button><svg class="s14"><use href="#fun"/></svg></button><button><svg class="s16"><use href="#clip"/></svg></button>
      </div>
      <div class="d-flex flex-column min-h">
        <div class="tree-head d-flex align-items-center justify-content-between">名称(按升序排序)<svg width="8" height="7"><path d="M4 0l4 7H0z" fill="#fff"/></svg></div>
        <div class="d-flex flex-grow-1 min-h">
          <ul class="tree" id="tree"></ul>
          <div class="sb-v d-flex flex-column"><span><svg width="10" height="10"><use href="#chev"/></svg></span><i></i><span class="mt-auto"><svg class="turn-d" width="10" height="10"><use href="#chev"/></svg></span></div>
        </div>
        <div class="sb-h d-flex"><span><svg class="turn-l" width="10" height="10"><use href="#chev"/></svg></span><i></i><span class="ms-auto me-3"><svg class="turn-r" width="10" height="10"><use href="#chev"/></svg></span></div>
      </div>
    </div>
    <div class="expl-foot d-flex align-items-center">
      <div class="drop"><select aria-label="场景工作区"><option>工作区: 默认</option></select></div><span class="bl"></span>
      <button class="lyr ms-1" aria-label="层"><svg class="s16"><use href="#stack"/></svg></button>
      <button class="on" aria-label="层次"><svg class="s18"><use href="#hier"/></svg></button><span class="bl ms-1"></span>
      <svg class="ms-4 mt-2 align-self-start" width="10" height="10"><use href="#more"/></svg>
    </div>
  </section>

  <div class="flex-grow-1 d-flex flex-column">
    <div class="flex-grow-1 d-flex">
      <div class="views"><div></div><div></div><div></div><div class="act"></div></div>
      <aside class="cmd">
        <div class="cmd-tabs d-flex">
          <button aria-label="创建"><svg class="s16"><path d="M8 0v16M0 8h16" stroke="#ddd" stroke-width="2"/></svg></button><button aria-label="修改"><svg class="s16"><use href="#modi"/></svg></button><button aria-label="层次"><svg class="s16"><use href="#hiert"/></svg></button><button aria-label="运动"><svg class="s18"><use href="#moti"/></svg></button><button aria-label="显示"><svg class="s16"><use href="#disp"/></svg></button><button aria-label="工具"><svg class="s16"><use href="#util"/></svg></button>
        </div>
        <div class="cmd-kinds d-flex">
          <button class="on"><svg class="s20"><use href="#ball"/></svg></button><button><svg class="s16"><use href="#shape"/></svg></button><button><svg class="s14"><use href="#bulb"/></svg></button><button><svg class="s14"><use href="#cam"/></svg></button><button><svg class="s16"><use href="#tri"/></svg></button><button><svg class="s16"><use href="#wave"/></svg></button><button><svg class="s14"><use href="#gears"/></svg></button>
        </div>
        <div class="drop"><select aria-label="类别"><option>标准基本体</option></select></div>
        <section class="roll">
          <h2 class="d-flex align-items-center"><span class="tri tri-s tri-l"></span>对象类型<svg class="ms-auto" width="7" height="7"><use href="#dots"/></svg></h2>
          <label class="auto d-flex align-items-center"><input type="checkbox" disabled>自动栅格</label>
          <div class="prims"><button>长方体</button><button>圆锥体</button><button>球体</button><button>几何球体</button><button>圆柱体</button><button>管状体</button><button>圆环</button><button>四棱锥</button><button>茶壶</button><button>平面</button><button>加强型文本</button></div>
        </section>
        <section class="roll">
          <h2 class="d-flex align-items-center"><span class="tri tri-s tri-l"></span>名称和颜色<svg class="ms-auto" width="7" height="7"><use href="#dots"/></svg></h2>
          <div class="nm-row d-flex"><input type="text" aria-label="名称" class="flex-grow-1"><button aria-label="颜色"></button></div>
        </section>
      </aside>
    </div>
    <div class="slide d-flex"><button>&lt;</button><button class="th">0 / 100</button><button>&gt;</button></div>
    <div class="track d-flex">
      <button class="cv" aria-label="曲线编辑器"><svg width="16" height="12"><path d="M1 1v11" stroke="#ddd" stroke-width="3" stroke-dasharray="1 1"/><path d="M5 9q2-12 4-3t5 2" fill="none" stroke="#3a9188" stroke-width="1.500"/></svg></button>
      <div class="ticks" id="ticks"></div>
    </div>
  </div>
</main>

<footer class="stat d-flex flex-shrink-0">
  <div class="maxs"><input type="text" aria-label="宏录制器"><input type="text" aria-label="侦听器" value="欢迎使用 MAXScr"></div>
  <div class="msgs"><div>未选定任何对象</div><div>正在加载...</div></div>
  <div>
    <div class="xyz d-flex align-items-center">
      <button aria-label="孤立"><svg class="s18"><use href="#iso"/></svg></button><button aria-label="锁定选择"><svg class="s16"><use href="#lock"/></svg></button><button class="me-1" aria-label="绝对模式"><svg class="s16"><use href="#absm"/></svg></button>
      <label for="cx">X:</label><input id="cx" type="text"><label for="cy">Y:</label><input id="cy" type="text"><label for="cz">Z:</label><input id="cz" type="text"><span class="ms-1">栅</span>
    </div>
    <div class="tags d-flex align-items-center"><button aria-label="时间标记"><svg class="s16"><use href="#cube"/></svg></button><span>添</span></div>
  </div>
</footer>

<div class="task d-flex flex-shrink-0">
  <button class="start" aria-label="开始"><svg width="16" height="16"><path d="m0 2 7-1v7H0zM8 1l8-1v8H8zM0 9h7v6l-7-1zM8 9h8v7l-8-1z" fill="#fff"/></svg></button>
  <div class="seek d-flex align-items-center"><svg width="17" height="17"><circle cx="10" cy="6" r="5" fill="none" stroke="#222" stroke-width="1.500"/><path d="m7 10-6 6" stroke="#222" stroke-width="1.500"/></svg><input type="text" placeholder="在这里输入你要搜索的内容" aria-label="搜索"></div>
  <button class="thin" aria-label="Cortana"><svg class="s16"><circle cx="8" cy="8" r="6.500" fill="none" stroke="#fff" stroke-width="2"/></svg></button>
  <button aria-label="任务视图"><svg class="s16"><path d="M1 0v3h9V0M1 16v-3h9v3M1 5h9v6H1zM14 0v16M13 6h3v3h-3z" fill="none" stroke="#fff"/></svg></button>
  <button class="ms-px" aria-label="Edge"><svg class="s24" viewBox="0 0 24 24"><path d="M0 11Q2 0 12 0q11 1 12 10 0 6-6 6-4 0-4-2 2-2 0-4-3-4-8-2-4 2-5 7-1-2-1-4z" fill="url(#ge)"/><path d="M1 15q2-8 9-7-4 3-2 8 4 7 13 3-5 6-12 5-7-3-8-9z" fill="#1273c9"/><path d="M9 9q-6 7 1 12 6 3 11-2-6 2-10-2-3-4-2-8z" fill="#0c4c9c"/></svg></button>
  <button class="run" aria-label="资源管理器"><svg class="s24" viewBox="0 0 24 24"><path d="M1 3h8l2 2h12v16H1z" fill="#f4c13b"/><path d="M1 8h22v13H1z" fill="#ffd968"/><path d="M5 22v-8h14v8h-4v-4H9v4z" fill="#3a94d4"/></svg></button>
  <button aria-label="截图工具"><svg class="s24" viewBox="0 0 24 24"><ellipse cx="11" cy="11" rx="11" ry="7" fill="#a34e4a" transform="rotate(-20 11 11)"/><ellipse cx="12" cy="8" rx="11" ry="6" fill="#eee" transform="rotate(-20 12 8)"/><path d="M8 5l9 10M17 5l-3 10" stroke="#888"/><path d="M13 14l6 6M20 14l-5 7" stroke="#177fb5" stroke-width="3"/></svg></button>
  <button class="run" aria-label="画图"><svg class="s24" viewBox="0 0 24 24"><path d="M1 18Q2 6 13 5q10 1 10 8t-9 9q-3 0-3-4t-4-2-6 2z" fill="#c8dcea"/><circle cx="7" cy="12" r="2" fill="#d33"/><circle cx="12" cy="8" r="2" fill="#4b4"/><circle cx="17" cy="9" r="2" fill="#e8b32b"/><path d="M21 3 15 21" stroke="#d98a2b" stroke-width="3"/><path d="m19 0 5 2-3 4z" fill="#b98c5c"/></svg></button>
  <button aria-label="Firefox"><svg class="s24" viewBox="0 0 24 24"><path d="M3 4q1 2 3 2 3-2 4 0 1-5 5-6 0 4 4 6 5 6 3 11-3 7-10 7-9 0-11-9Q0 8 3 4z" fill="#ff7a1c"/><path d="M13 1q5 5 9 9 1 8-6 12 5-8-1-14z" fill="#ffd22e"/><circle cx="11" cy="13" r="5" fill="#7542c9"/><path d="M5 9q5 1 9 1-3 3-6 3 0 4 5 3-6 6-10 0z" fill="#ff4438"/></svg></button>
  <button class="run" aria-label="CAD 看图"><svg class="s24" viewBox="0 0 24 24"><path d="M1 1h22v22H1z" fill="#f3f3f0" stroke="#6e87c4" stroke-width="3"/><path d="M5 19Q17 17 20 7" fill="none" stroke="#e99a22" stroke-width="3"/><path d="M4 11q7-1 9-7" fill="none" stroke="#3b6bc0" stroke-width="2"/></svg></button>
  <button class="run cur" aria-label="3ds Max"><svg class="s24" viewBox="0 0 24 24"><path d="M0 0h24v24H0z" fill="#e6efec"/><path d="M8 5q7-2 8 1 0 4-5 5 6 0 5 4-2 4-9 2" fill="none" stroke="#11a09b" stroke-width="4"/><path d="M14 21h7" stroke="#11a09b" stroke-width="2"/></svg></button>
  <button class="run" aria-label="录像"><svg class="s24" viewBox="0 0 24 24"><rect width="24" height="24" rx="4" fill="#fff"/><path d="M8 4l8 4" stroke="#fb2d6b" stroke-width="5" stroke-linecap="round"/><path d="m16 9-7 4" stroke="#22a6e8" stroke-width="5" stroke-linecap="round"/><path d="m3 18 2 3 2-3m3 0v4" stroke="#fb2d6b" fill="none"/><rect x="11" y="14" width="13" height="10" rx="2" fill="#bfe6fb" stroke="#fff"/><path d="M15 16v6m5-6v6" stroke="#1b86c8" stroke-width="2.500"/></svg></button>
</div>

<div class="dlg" role="dialog" aria-labelledby="dt">
  <h1 id="dt">文件加载: Gamma 和 LUT 设置不匹配</h1>
  <div class="outer">
    <div class="text-center">文件的 Gamma 和 LUT 设置与系统的<br>Gamma 和 LUT 设置不匹配。</div>
    <fieldset class="first"><legend>文件的 Gamma 和 LUT 设置:</legend>
      <div class="pair"><label for="a1">Gamma 和 LUT 修正:</label><input id="a1" value="禁用" readonly></div>
      <div class="pair"><label for="a2">位图文件输入 Gamma:</label><input id="a2" value="2.2" readonly></div>
      <div class="pair"><label for="a3">位图文件输出 Gamma:</label><input id="a3" value="2.2" readonly></div>
    </fieldset>
    <fieldset><legend>系统的 Gamma 和 LUT 设置:</legend>
      <div class="pair"><label for="b1">Gamma &amp; LUT Correction:</label><input id="b1" value="启用" readonly></div>
      <div class="pair"><label for="b2">位图文件输入 Gamma:</label><input id="b2" value="2.2" readonly></div>
      <div class="pair"><label for="b3">位图文件输出 Gamma:</label><input id="b3" value="2.2" readonly></div>
    </fieldset>
  </div>
  <fieldset class="ask"><legend>是否:</legend>
    <label class="d-flex align-items-center"><input type="radio" name="g">是否保持系统的 Gamma 和 LUT 设置?</label>
    <label class="d-flex align-items-center"><input type="radio" name="g" checked>是否采用文件的 Gamma 和 LUT 设置?</label>
  </fieldset>
  <button class="ok">确定</button>
</div>

<div class="site d-flex">
  <svg width="148" height="122" viewBox="0 0 148 122">
    <path d="M11 56Q30 18 82 3q54-9 64 27 2 14-4 26-3-2-6-2Q141 14 98 12 46 12 11 56z" fill="#8fc31f"/>
    <path d="M6 66Q4 104 50 106 106 104 147 54 116 120 48 121-8 116 6 66z" fill="#16429b"/>
    <path d="M75 24l24 14v16l-14 6v40L75 98zM113 54l16 8-16 22z" fill="#dcdcdf"/>
    <path d="M44 34 70 20v81H44z" fill="url(#gb)"/><path d="M11 74l22-11v34Q17 91 11 74zM85 58l22-10v38l-22 10z" fill="#16429b"/>
  </svg>
  <div class="site-name"><div class="cn">土木工程网</div><div class="en">www.civilcn.com</div></div>
</div>

<script>
const names = ['Camera01|cam','Camera01.Target|ball'];
for (const g of '07 20 21 69 70 138 145 146 147 148 149 152 188 201 265 1871013448 1871013449 1871013450 1871013451 1871013452 1871013455 1871013456'.split(' ')) names.push('Group' + g + '|grp');
names.push('Line19|ball', 'Object01|ball', 'Object03|ball', 'Object07|ball');
for (const [p, t] of [['01','ball'],['02','bulb'],['04','ball'],['06','bulb'],['07','ball'],['08','bulb']]) names.push('Point' + p + '|bulb', 'Point' + p + '.Target|' + t);
names.push('Point09|bulb');
document.getElementById('tree').innerHTML = names.map(n => {
  const [t, k] = n.split('|');
  const arrow = k === 'grp' ? '<svg width="6" height="18"><path d="M0 4l6 5.500-6 5.500z" fill="#fff"/></svg>' : '';
  return `<li><span class="twig">${arrow}</span><svg class="s14"><use href="#eye"/></svg><svg class="s14 ms-px"><use href="#${k}"/></svg><span class="nm">${t}</span></li>`;
}).join('');
let out = '';
for (let i = 0; i < 78; i++) out += `<div class="tick${i ? '' : ' zero'}">${i % 5 ? '' : i}</div>`;
document.getElementById('ticks').innerHTML = out;
</script>
<script src="https://cdn.jsdelivr.net/npm/bootstrap@5.3.0/dist/js/bootstrap.bundle.min.js"></script>
</body>
</html>
